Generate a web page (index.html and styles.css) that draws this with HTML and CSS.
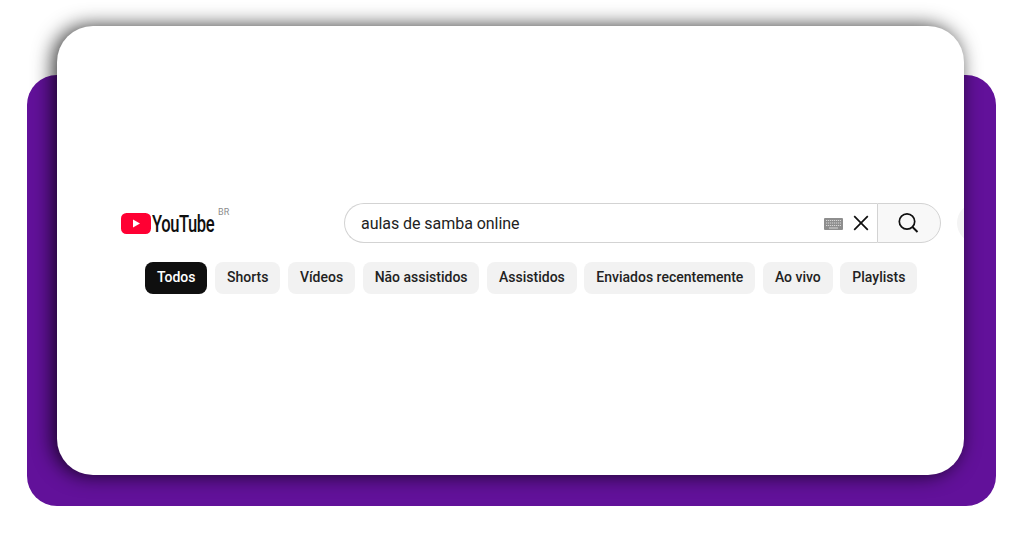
FILE: index.html
```html
<!DOCTYPE html>
<html lang="pt-BR">
<head>
<meta charset="utf-8">
<title>YouTube</title>
<link rel="stylesheet" href="styles.css">
</head>
<body>
<main class="stage">
  <div class="backdrop"></div>
  <section class="card">
    <header class="masthead">
      <a class="logo">
        <svg class="logo-mark" width="30" height="21" viewBox="0 0 30 21" aria-hidden="true">
          <rect width="30" height="21" rx="5.5" fill="#ff0033"/>
          <path d="M12 6.4v8.2l7-4.1z" fill="#fff"/>
        </svg>
        <span class="wordmark">YouTube</span>
        <span class="country">BR</span>
      </a>
      <form class="search">
        <div class="search-field">
          <span class="query">aulas de samba online</span>
          <svg class="keyboard" width="19" height="12" viewBox="0 0 19 12" aria-hidden="true">
            <rect width="19" height="12" rx="1" fill="#8e8e8e"/>
            <path d="M2 2.5h15M2 5h15M2 7.5h15" stroke="#d6d6d6" stroke-width="1.1" stroke-dasharray="1.2 .8"/>
            <path d="M5 10h9" stroke="#d6d6d6" stroke-width="1.2"/>
          </svg>
          <svg class="clear" width="16" height="16" viewBox="0 0 16 16" aria-hidden="true">
            <path d="M1.2 1.2l13.6 13.6M14.8 1.2L1.2 14.8" stroke="#0f0f0f" stroke-width="1.7" fill="none"/>
          </svg>
        </div>
        <div class="search-button">
          <svg width="24" height="24" viewBox="0 0 24 24" aria-hidden="true">
            <circle cx="11" cy="10.5" r="7.7" fill="none" stroke="#0f0f0f" stroke-width="1.7"/>
            <path d="M16.5 16l5 5" stroke="#0f0f0f" stroke-width="1.9" fill="none"/>
          </svg>
        </div>
      </form>
      <div class="voice"></div>
    </header>
    <nav class="chips">
      <span class="chip chip-active">Todos</span>
      <span class="chip">Shorts</span>
      <span class="chip">Vídeos</span>
      <span class="chip">Não assistidos</span>
      <span class="chip">Assistidos</span>
      <span class="chip">Enviados recentemente</span>
      <span class="chip">Ao vivo</span>
      <span class="chip">Playlists</span>
    </nav>
  </section>
</main>
</body>
</html>
```
FILE: styles.css
```css
* { box-sizing: border-box; }
html, body { margin: 0; height: 536px; overflow: hidden; background: #fff; }
body { font-family: Roboto, "Liberation Sans", sans-serif; color: #0f0f0f; }

.stage {
  display: grid;
  width: 1024px;
  height: 536px;
}
.backdrop {
  grid-area: 1 / 1;
  width: 969px;
  height: 431px;
  margin: 75px 0 0 27px;
  background: #62119a;
  border-radius: 30px;
}
.card {
  grid-area: 1 / 1;
  width: 907px;
  height: 449px;
  margin: 26px 0 0 57px;
  padding: 177px 0 0 64px;
  background: #fff;
  border-radius: 36px;
  box-shadow: -4px 0 20px rgba(0, 0, 0, .8);
  overflow: hidden;
  position: relative;
}
.masthead {
  display: flex;
  align-items: center;
  height: 40px;
  width: 860px;
}
.logo {
  display: flex;
  align-items: center;
  width: 223px;
  position: relative;
  flex: none;
}
.logo-mark { flex: none; margin-top: 1px; }
.wordmark {
  display: inline-block;
  margin-left: 1px;
  font-size: 24px;
  font-weight: 500;
  letter-spacing: -.6px;
  line-height: 24px;
  transform: scaleX(.69);
  transform-origin: left center;
  margin-top: 2px;
}
.country {
  position: absolute;
  left: 97px;
  top: -4px;
  font-size: 9px;
  line-height: 12px;
  letter-spacing: .2px;
  color: #8c8c8c;
}
.search {
  display: flex;
  width: 597px;
  height: 40px;
  flex: none;
}
.search-field {
  flex: 1;
  display: flex;
  align-items: center;
  padding: 0 8px 0 16px;
  border: 1px solid #d3d3d3;
  border-right: 0;
  border-radius: 20px 0 0 20px;
  background: #fff;
}
.query {
  flex: 1;
  font-size: 16px;
  letter-spacing: -.05px;
  color: #222;
}
.keyboard { flex: none; margin-right: 10px; margin-top: 1px; }
.clear { flex: none; }
.search-button {
  flex: none;
  width: 64px;
  display: flex;
  align-items: center;
  justify-content: center;
  padding-right: 2px;
  border: 1px solid #d3d3d3;
  border-radius: 0 20px 20px 0;
  background: #f8f8f8;
}
.voice {
  flex: none;
  width: 40px;
  height: 40px;
  margin-left: 16px;
  border-radius: 50%;
  background: #f4f4f4;
}
.chips {
  display: flex;
  gap: 7.75px;
  margin: 19px 0 0 24px;
}
.chip {
  flex: none;
  height: 32px;
  padding: 0 11.9px;
  border-radius: 8px;
  background: #f2f2f2;
  font-size: 14px;
  font-weight: 500;
  line-height: 30px;
  color: #222;
}
.chip-active { background: #0f0f0f; color: #fff; }
```
